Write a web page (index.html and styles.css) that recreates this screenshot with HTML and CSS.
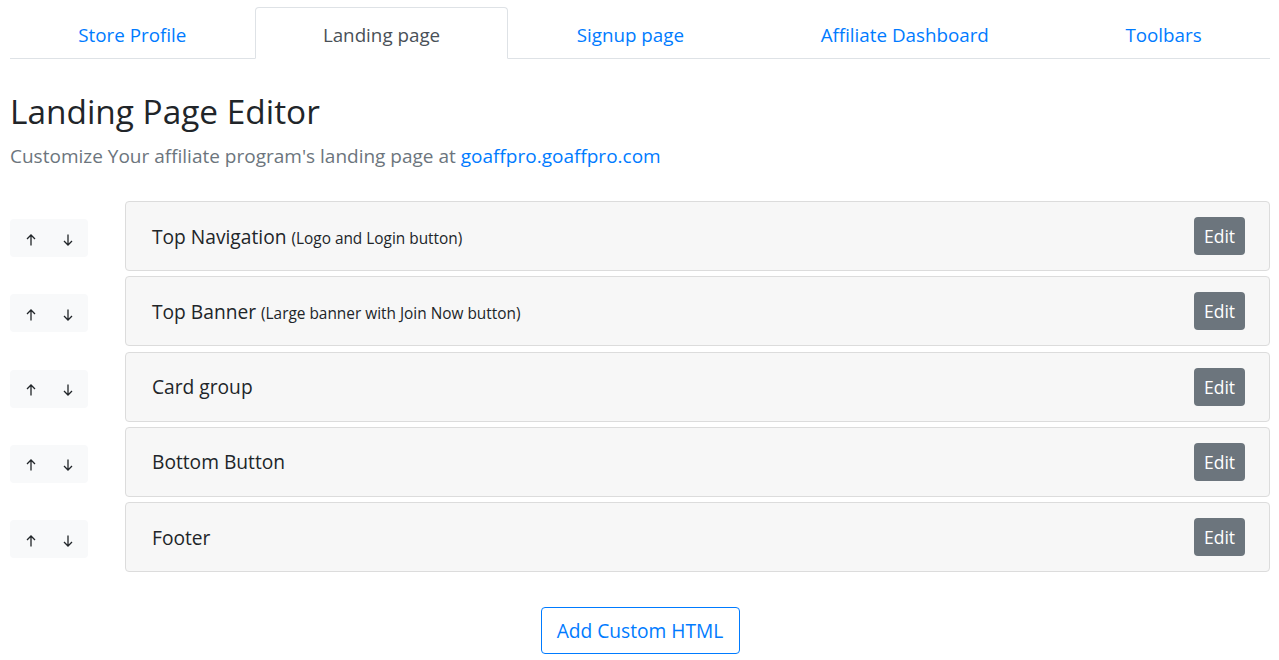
FILE: index.html
```html
<!DOCTYPE html>
<html lang="en">
<head>
<meta charset="utf-8">
<title>Landing Page Editor</title>
<link rel="stylesheet" href="styles.css">
</head>
<body>
<div class="wrap">
  <nav class="tabs">
    <a class="tab" href="#">Store Profile</a>
    <a class="tab active" href="#">Landing page</a>
    <a class="tab" href="#">Signup page</a>
    <a class="tab" href="#">Affiliate Dashboard</a>
    <a class="tab" href="#">Toolbars</a>
  </nav>

  <h1 class="title">Landing Page Editor</h1>
  <p class="subtitle">Customize Your affiliate program's landing page at <a href="#">goaffpro.goaffpro.com</a></p>

  <div class="sections">
    <div class="row">
      <div class="mover"><div class="arrows"><svg class="arr" viewBox="0 0 10 12"><path d="M5 11.5V1M1 5L5 1l4 4"/></svg><svg class="arr" viewBox="0 0 10 12"><path d="M5 0.5V11M1 7l4 4 4-4"/></svg></div></div>
      <div class="card"><span class="name">Top Navigation <small>(Logo and Login button)</small></span><button class="edit">Edit</button></div>
    </div>
    <div class="row">
      <div class="mover"><div class="arrows"><svg class="arr" viewBox="0 0 10 12"><path d="M5 11.5V1M1 5L5 1l4 4"/></svg><svg class="arr" viewBox="0 0 10 12"><path d="M5 0.5V11M1 7l4 4 4-4"/></svg></div></div>
      <div class="card"><span class="name">Top Banner <small>(Large banner with Join Now button)</small></span><button class="edit">Edit</button></div>
    </div>
    <div class="row">
      <div class="mover"><div class="arrows"><svg class="arr" viewBox="0 0 10 12"><path d="M5 11.5V1M1 5L5 1l4 4"/></svg><svg class="arr" viewBox="0 0 10 12"><path d="M5 0.5V11M1 7l4 4 4-4"/></svg></div></div>
      <div class="card"><span class="name">Card group</span><button class="edit">Edit</button></div>
    </div>
    <div class="row">
      <div class="mover"><div class="arrows"><svg class="arr" viewBox="0 0 10 12"><path d="M5 11.5V1M1 5L5 1l4 4"/></svg><svg class="arr" viewBox="0 0 10 12"><path d="M5 0.5V11M1 7l4 4 4-4"/></svg></div></div>
      <div class="card"><span class="name">Bottom Button</span><button class="edit">Edit</button></div>
    </div>
    <div class="row">
      <div class="mover"><div class="arrows"><svg class="arr" viewBox="0 0 10 12"><path d="M5 11.5V1M1 5L5 1l4 4"/></svg><svg class="arr" viewBox="0 0 10 12"><path d="M5 0.5V11M1 7l4 4 4-4"/></svg></div></div>
      <div class="card"><span class="name">Footer</span><button class="edit">Edit</button></div>
    </div>
  </div>

  <div class="add-wrap"><button class="add">Add Custom HTML</button></div>
</div>
</body>
</html>
```

FILE: styles.css
```css
* { box-sizing: border-box; }
html, body { margin: 0; padding: 0; background: #fff; }
body {
  font-family: "Open Sans", "Noto Sans", sans-serif;
  color: #212529;
  font-size: 18px;
}
a { color: #007bff; text-decoration: none; }
.wrap { padding: 7px 9px 0 10px; }

.tabs {
  display: flex;
  border-bottom: 1px solid #dee2e6;
}
.tab {
  flex: 1 1 auto;
  text-align: center;
  height: 52px;
  line-height: 54px;
  font-size: 18.8px;
  border: 1px solid transparent;
  border-top-left-radius: 4px;
  border-top-right-radius: 4px;
  margin-bottom: -1px;
  padding: 0 16px;
}
.tab.active {
  color: #495057;
  background: #fff;
  border-color: #dee2e6 #dee2e6 #fff;
}

.title {
  font-weight: 400;
  font-size: 33.4px;
  line-height: 40px;
  margin: 32px 0 0;
}
.subtitle {
  color: #6c757d;
  font-size: 19px;
  margin: 11px 0 0;
  line-height: 28px;
}

.sections { margin-top: 31px; display: flex; flex-direction: column; gap: 5.25px; }
.row { display: flex; align-items: center; }
.mover { width: 115px; flex: none; padding-top: 5px; }
.arrows {
  width: 78px;
  height: 38px;
  background: #f8f9fa;
  border-radius: 4px;
  display: flex;
  align-items: center;
  justify-content: center;
  gap: 27px;
  padding-top: 3px;
  margin-top: -1px;
}
.arr { width: 10px; height: 12px; fill: none; stroke: #212529; stroke-width: 1.3; }

.card {
  flex: 1;
  height: 70px;
  background: #f7f7f7;
  border: 1px solid #dcdcdc;
  border-radius: 4px;
  display: flex;
  align-items: center;
  justify-content: space-between;
  padding: 0 24px 0 26px;
}
.name { font-size: 19.2px; }
.name small { font-size: 15.4px; }
.edit {
  font-family: inherit;
  font-size: 17.5px;
  color: #fff;
  background: #6c757d;
  border: 0;
  border-radius: 4px;
  width: 51px;
  height: 38px;
  padding: 0;
  margin-top: 0;
}

.add-wrap { display: flex; justify-content: center; margin-top: 35px; }
.add {
  font-family: inherit;
  font-size: 19.2px;
  color: #007bff;
  background: #fff;
  border: 1px solid #007bff;
  border-radius: 4px;
  width: 199px;
  height: 47px;
  padding: 0;
}
```
